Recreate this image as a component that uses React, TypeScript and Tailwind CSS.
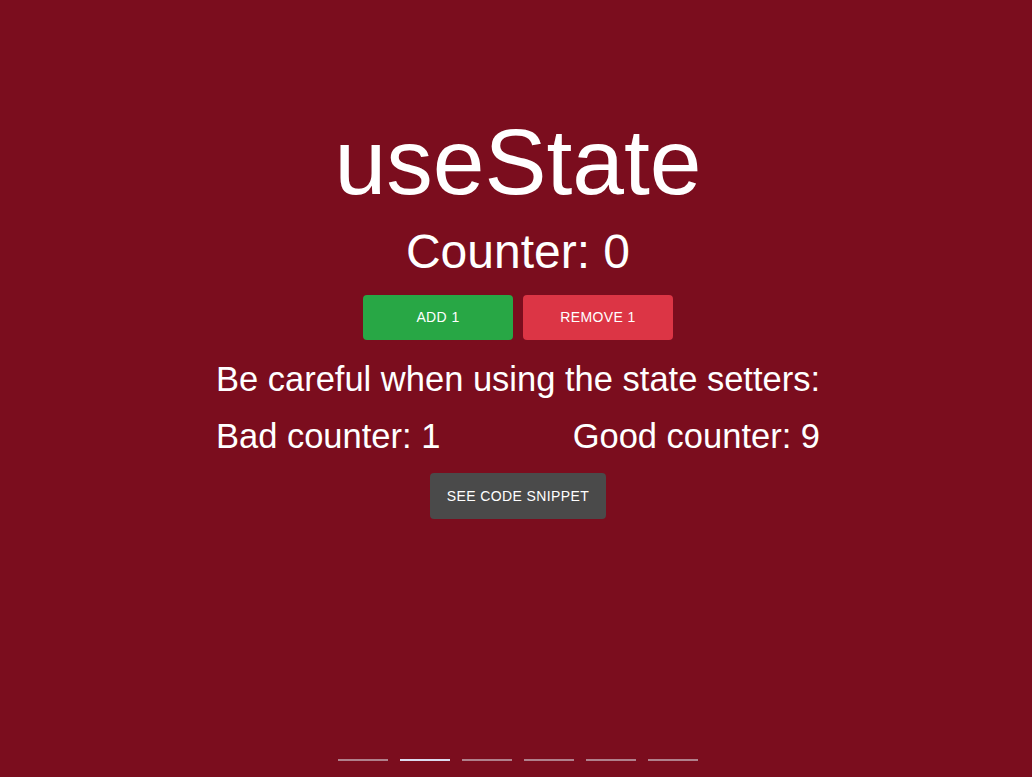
import React from "react";

export default function App() {
  const bars = [false, true, false, false, false, false];
  return (
    <div
      className="w-[1032px] h-[777px] bg-[#7b0d1e] text-white flex flex-col items-center relative overflow-hidden pl-[4px]"
      style={{ fontFamily: '"Liberation Sans", Arial, sans-serif' }}
    >
      <h1 className="mt-[116px] text-[93px] leading-none font-normal">useState</h1>
      <div className="mt-[19px] text-[48px] leading-none">Counter: 0</div>
      <div className="mt-[19px] flex gap-[10px]">
        <button className="w-[150px] h-[45px] rounded bg-[#28a745] text-[14px] tracking-[0.4px] uppercase">
          Add 1
        </button>
        <button className="w-[150px] h-[45px] rounded bg-[#dc3545] text-[14px] tracking-[0.4px] uppercase">
          Remove 1
        </button>
      </div>
      <div className="mt-[22px] w-fit flex flex-col">
        <div className="text-[34.5px] leading-none">Be careful when using the state setters:</div>
        <div className="mt-[22px] flex justify-between text-[34.5px] leading-none">
          <span>Bad counter: 1</span>
          <span>Good counter: 9</span>
        </div>
      </div>
      <button className="mt-[20px] w-[176px] h-[46px] rounded bg-[#4a4a4a] text-[14px] tracking-[0.4px] uppercase">
        See code snippet
      </button>
      <div className="absolute bottom-[16px] left-[4px] right-0 flex justify-center gap-[12px]">
        {bars.map((a, i) => (
          <div key={i} className={a ? "w-[50px] h-[2px] bg-[#dcdcf0]" : "w-[50px] h-[2px] bg-[#b0808c]"} />
        ))}
      </div>
    </div>
  );
}
